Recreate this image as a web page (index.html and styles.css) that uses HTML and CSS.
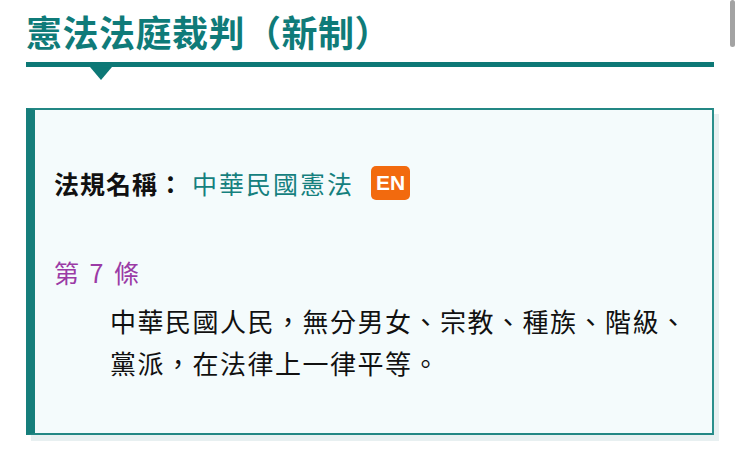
FILE: index.html
```html
<!DOCTYPE html>
<html lang="zh-Hant">
<head>
<meta charset="utf-8">
<title>憲法法庭裁判（新制）</title>
<link rel="stylesheet" href="styles.css">
</head>
<body>
<div class="page">
  <header class="head">
    <h1 class="title">憲法法庭裁判（新制）</h1>
    <div class="bar"><span class="arrow"></span></div>
  </header>
  <section class="card">
    <div class="law-row">
      <span class="law-label">法規名稱：</span>
      <a class="law-name" href="#">中華民國憲法</a>
      <span class="badge">EN</span>
    </div>
    <div class="article-no">第 7 條</div>
    <p class="article-text">中華民國人民，無分男女、宗教、種族、階級、黨派，在法律上一律平等。</p>
  </section>
</div>
<div class="scrollbar"></div>
</body>
</html>
```

FILE: styles.css
```css
html, body {
  margin: 0;
  padding: 0;
  background: #ffffff;
}
body {
  font-family: "Noto Sans CJK TC", "Noto Sans", sans-serif;
  color: #111;
  width: 740px;
  height: 450px;
  overflow: hidden;
  position: relative;
}
.page {
  padding: 0 26px;
  width: 688px;
}
.head {
  padding-top: 10px;
}
.title {
  margin: 0;
  font-size: 36px;
  line-height: 43px;
  font-weight: 700;
  color: #0f7b79;
  letter-spacing: 0.5px;
}
.bar {
  position: relative;
  margin-top: 9px;
  height: 5px;
  background: #0d7876;
}
.arrow {
  position: absolute;
  left: 64px;
  top: 5px;
  width: 0;
  height: 0;
  border-left: 11px solid transparent;
  border-right: 11px solid transparent;
  border-top: 13px solid #0d7876;
}
.card {
  margin-top: 41px;
  background: #f4fbfc;
  border-top: 2px solid #238784;
  border-right: 2px solid #2a8f8c;
  border-bottom: 2px solid #238784;
  border-left: 9px solid #167e7b;
  box-shadow: 5px 6px 0 #e8f0f1;
  padding: 56px 19px 49px 19px;
}
.law-row {
  display: flex;
  align-items: center;
  height: 34px;
}
.law-label {
  font-size: 25px;
  font-weight: 700;
  letter-spacing: 1px;
  color: #111;
}
.law-name {
  font-size: 25px;
  letter-spacing: 2px;
  color: #15807e;
  text-decoration: none;
  margin-left: 8px;
}
.badge {
  margin-left: 17px;
  width: 39px;
  height: 34px;
  border-radius: 5px;
  background: #f26a0e;
  color: #fff;
  font-family: "Liberation Sans", Arial, sans-serif;
  font-weight: 700;
  font-size: 21px;
  display: flex;
  align-items: center;
  justify-content: center;
}
.article-no {
  margin-top: 52px;
  font-size: 25px;
  line-height: 41.6px;
  color: #9b3ba6;
  letter-spacing: 1.5px;
  word-spacing: 2px;
}
.article-text {
  margin: 6px 0 0 56px;
  font-size: 26px;
  line-height: 42px;
  letter-spacing: 1.5px;
  color: #111;
}
.scrollbar {
  position: absolute;
  right: 5px;
  top: 0;
  width: 5px;
  height: 47px;
  border-radius: 3px;
  background: #a3a3a3;
}
```
